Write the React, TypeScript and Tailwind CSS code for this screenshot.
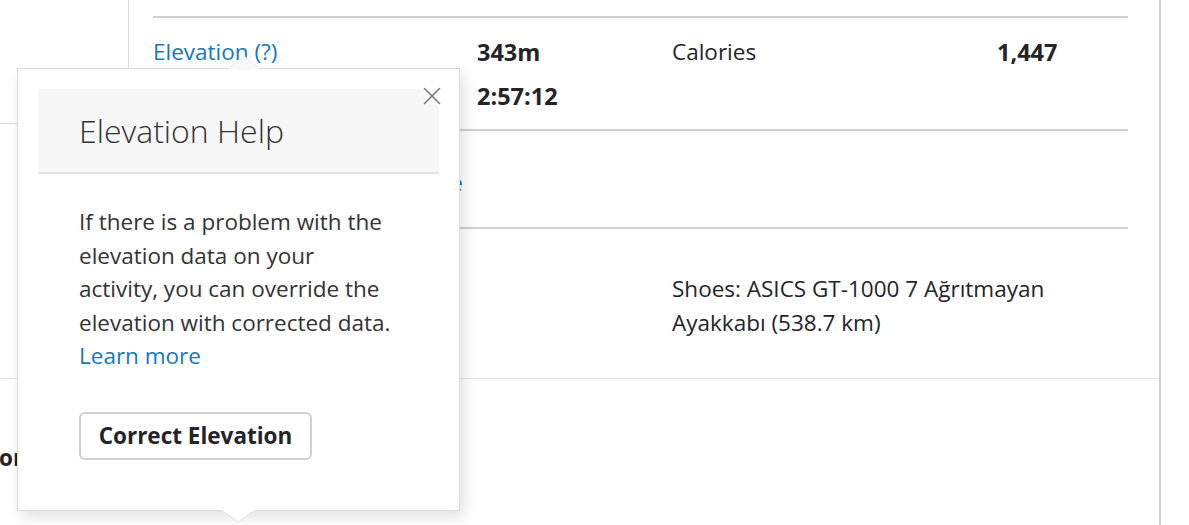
import { X } from "lucide-react";

const font = { fontFamily: '"Open Sans", "Noto Sans", sans-serif' };

export default function App() {
  return (
    <div
      className="relative w-[1189px] h-[525px] overflow-hidden bg-white text-[#242428]"
      style={font}
    >
      {/* Page content */}
      <div className="w-[1161px] h-[525px] border-r-2 border-[#cfcfd4] flex flex-col">
        {/* Top section */}
        <div className="flex h-[379px] border-b border-[#e6e6ea]">
          <div className="w-[129px] border-r border-[#dcdce0]">
            <div className="h-[124px] border-b border-[#dcdce0]" />
          </div>

          <div className="flex-1 pl-6 pr-[31px] pt-4 flex flex-col">
            <div className="border-t-2 border-[#cfcfd4]" />

            {/* Stats row */}
            <div className="grid grid-cols-[324px_195px_325px_1fr] pt-3 pb-[11px] text-[22.5px] leading-[44px]">
              <a className="text-[#1479b8]">Elevation (?)</a>
              <span className="font-bold text-[23.5px]">343m</span>
              <span>Calories</span>
              <span className="font-bold text-[23.5px]">1,447</span>
              <span>Elapsed Time</span>
              <span className="font-bold text-[23.5px]">2:57:12</span>
              <span />
              <span />
            </div>
            <div className="border-t-2 border-[#cfcfd4]" />

            {/* Links row */}
            <div className="h-[96px] flex items-center pt-2 text-[22.5px]">
              <div className="w-[310px] flex justify-end">
                <a className="text-[#1479b8] whitespace-nowrap">Elevation corrected, revert to source</a>
              </div>
            </div>
            <div className="border-t-2 border-[#cfcfd4]" />

            {/* Gear row */}
            <div className="grid grid-cols-[519px_1fr] pt-[43px] text-[22.5px] leading-[34px]">
              <span />
              <span className="w-[420px]">
                Shoes: ASICS GT-1000 7 Ağrıtmayan
                <br />
                Ayakkabı (538.7 km)
              </span>
            </div>
          </div>
        </div>

        {/* Lower section */}
        <div className="pt-[62px] text-[22.5px] font-bold leading-[34px] -ml-[1px]">on</div>
      </div>

      {/* Elevation help popover */}
      <div className="absolute left-[17px] top-[68px] w-[443px] h-[443px] bg-white border border-[#dcdce0] shadow-[4px_6px_14px_rgba(0,0,0,0.12)] z-10">
        <svg
          className="absolute left-[208px] -top-[13px]"
          width="36"
          height="14"
          viewBox="0 0 36 14"
        >
          <path d="M0 14 L18 0 L36 14 Z" fill="#f7f7f8" />
          <path d="M0 14 L18 0 L36 14" fill="none" stroke="#ececef" strokeWidth="1" />
        </svg>
        <svg
          className="absolute left-[203px] -bottom-[13px]"
          width="34"
          height="13"
          viewBox="0 0 34 13"
        >
          <path d="M0 0 L17 12 L34 0 Z" fill="#ffffff" />
          <path d="M0 0 L17 12 L34 0" fill="none" stroke="#e8e8ec" strokeWidth="1.5" />
        </svg>

        <button className="absolute right-[12px] top-[12px] text-[#777]">
          <X className="w-[30px] h-[30px]" strokeWidth={1.2} />
        </button>

        <div className="p-5">
          <div className="h-[85px] bg-[#f7f7f8] border-b-2 border-[#e3e3e7] pl-[41px] flex items-center">
            <h2 className="text-[32px] font-light text-[#333]">Elevation Help</h2>
          </div>

          <div className="pl-[41px] pt-[31px]">
            <p className="w-[340px] text-[22.5px] leading-[33.5px] text-[#333]">
              If there is a problem with the
              <br />
              elevation data on your
              <br />
              activity, you can override the
              <br />
              elevation with corrected data.
              <br />
              <a className="text-[#1479b8]">Learn more</a>
            </p>
            <button className="mt-[39px] w-[233px] h-[48px] border-2 border-[#cfcfd4] rounded-md text-[22.5px] font-bold text-[#242428]">
              Correct Elevation
            </button>
          </div>
        </div>
      </div>
    </div>
  );
}
